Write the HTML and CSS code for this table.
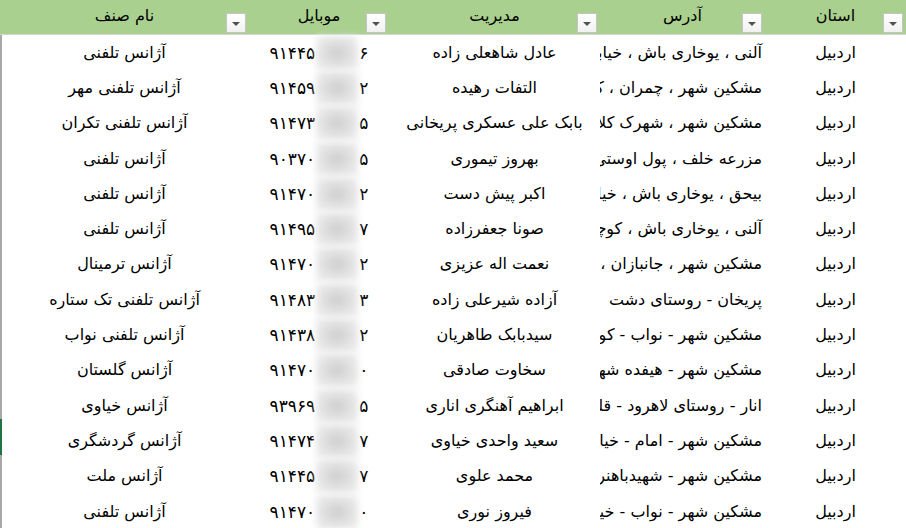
FILE: index.html
```html
<!DOCTYPE html>
<html lang="fa" dir="rtl">
<head>
<meta charset="utf-8">
<title>جدول آژانس‌ها</title>
<link rel="stylesheet" href="styles.css">
</head>
<body>
<div class="sheet">
  <div class="row head">
    <div class="hcell">استان<span class="filter"></span></div>
    <div class="hcell">آدرس<span class="filter"></span></div>
    <div class="hcell">مدیریت<span class="filter"></span></div>
    <div class="hcell">موبایل<span class="filter"></span></div>
    <div class="hcell">نام صنف<span class="filter"></span></div>
  </div>
  <div class="body">
    <div class="row"><div class="c">اردبیل</div><div class="c addr">آلنی ، یوخاری باش ، خیابان اصلی</div><div class="c">عادل شاهعلی زاده</div><div class="c mob"><span>۹۱۴۴۵</span><span class="blur"></span><span>۶</span></div><div class="c">آژانس تلفنی</div></div>
    <div class="row"><div class="c">اردبیل</div><div class="c addr">مشکین شهر ، چمران ، کوچه</div><div class="c">التفات رهیده</div><div class="c mob"><span>۹۱۴۵۹</span><span class="blur"></span><span>۲</span></div><div class="c">آژانس تلفنی مهر</div></div>
    <div class="row"><div class="c">اردبیل</div><div class="c addr">مشکین شهر ، شهرک کلانتری</div><div class="c">بابک علی عسکری پریخانی</div><div class="c mob"><span>۹۱۴۷۳</span><span class="blur"></span><span>۵</span></div><div class="c">آژانس تلفنی تکران</div></div>
    <div class="row"><div class="c">اردبیل</div><div class="c addr">مزرعه خلف ، پول اوستی ، خیابان</div><div class="c">بهروز تیموری</div><div class="c mob"><span>۹۰۳۷۰</span><span class="blur"></span><span>۵</span></div><div class="c">آژانس تلفنی</div></div>
    <div class="row"><div class="c">اردبیل</div><div class="c addr">بیحق ، یوخاری باش ، خیابان</div><div class="c">اکبر پیش دست</div><div class="c mob"><span>۹۱۴۷۰</span><span class="blur"></span><span>۲</span></div><div class="c">آژانس تلفنی</div></div>
    <div class="row"><div class="c">اردبیل</div><div class="c addr">آلنی ، یوخاری باش ، کوچه</div><div class="c">صونا جعفرزاده</div><div class="c mob"><span>۹۱۴۹۵</span><span class="blur"></span><span>۷</span></div><div class="c">آژانس تلفنی</div></div>
    <div class="row"><div class="c">اردبیل</div><div class="c addr">مشکین شهر ، جانبازان ، کوچه</div><div class="c">نعمت اله عزیزی</div><div class="c mob"><span>۹۱۴۷۰</span><span class="blur"></span><span>۲</span></div><div class="c">آژانس ترمینال</div></div>
    <div class="row"><div class="c">اردبیل</div><div class="c addr">پریخان - روستای دشت</div><div class="c">آزاده شیرعلی زاده</div><div class="c mob"><span>۹۱۴۸۳</span><span class="blur"></span><span>۳</span></div><div class="c">آژانس تلفنی تک ستاره</div></div>
    <div class="row"><div class="c">اردبیل</div><div class="c addr">مشکین شهر - نواب - کوچه</div><div class="c">سیدبابک طاهریان</div><div class="c mob"><span>۹۱۴۳۸</span><span class="blur"></span><span>۲</span></div><div class="c">آژانس تلفنی نواب</div></div>
    <div class="row"><div class="c">اردبیل</div><div class="c addr">مشکین شهر - هیفده شهریور</div><div class="c">سخاوت صادقی</div><div class="c mob"><span>۹۱۴۷۰</span><span class="blur"></span><span>۰</span></div><div class="c">آژانس گلستان</div></div>
    <div class="row"><div class="c">اردبیل</div><div class="c addr">انار - روستای لاهرود - قلعه</div><div class="c">ابراهیم آهنگری اناری</div><div class="c mob"><span>۹۳۹۶۹</span><span class="blur"></span><span>۵</span></div><div class="c">آژانس خیاوی</div></div>
    <div class="row"><div class="c">اردبیل</div><div class="c addr">مشکین شهر - امام - خیابان</div><div class="c">سعید واحدی خیاوی</div><div class="c mob"><span>۹۱۴۷۴</span><span class="blur"></span><span>۷</span></div><div class="c">آژانس گردشگری</div></div>
    <div class="row"><div class="c">اردبیل</div><div class="c addr">مشکین شهر - شهیدباهنر</div><div class="c">محمد علوی</div><div class="c mob"><span>۹۱۴۴۵</span><span class="blur"></span><span>۷</span></div><div class="c">آژانس ملت</div></div>
    <div class="row"><div class="c">اردبیل</div><div class="c addr">مشکین شهر - نواب - خیابان</div><div class="c">فیروز نوری</div><div class="c mob"><span>۹۱۴۷۰</span><span class="blur"></span><span>۰</span></div><div class="c">آژانس تلفنی</div></div>
    <span class="marker"></span>
  </div>
</div>
</body>
</html>
```

FILE: styles.css
```css
html, body {
  margin: 0;
  padding: 0;
  background: #ffffff;
}
body {
  width: 906px;
  height: 528px;
  overflow: hidden;
  font-family: "DejaVu Sans", "Noto Sans", sans-serif;
  font-size: 16px;
  color: #000;
}
.sheet {
  direction: rtl;
  width: 906px;
}
.row {
  display: grid;
  grid-template-columns: 141px 165px 211px 140px 249px;
  height: 35.3px;
  align-items: center;
}
.head {
  height: 34px;
  background: #a9d08e;
  border-bottom: 1px solid #d2d8ce;
}
.hcell {
  position: relative;
  height: 34px;
  line-height: 32px;
  text-align: center;
}
.filter {
  position: absolute;
  right: 3px;
  bottom: 1px;
  width: 18px;
  height: 18px;
  background: linear-gradient(#ffffff, #f1f1f1);
  border: 1px solid #c4c4c4;
}
.filter::after {
  content: "";
  position: absolute;
  left: 5px;
  top: 8px;
  border-left: 4px solid transparent;
  border-right: 4px solid transparent;
  border-top: 4px solid #505050;
}
.body {
  position: relative;
  border-left: 2px solid #a8a8a8;
}
.c {
  text-align: center;
  white-space: nowrap;
  overflow: hidden;
  line-height: 32px;
}
.addr {
  text-align: right;
  padding-right: 3px;
}
.mob {
  direction: ltr;
  display: flex;
  justify-content: center;
  align-items: center;
  overflow: visible;
  font-size: 17px;
}
.blur {
  display: inline-block;
  width: 42px;
  height: 34px;
  margin: 0 1px;
  background: radial-gradient(ellipse at center, #cdcdcd 0%, #e0e0e0 45%, #f2f2f2 100%);
  filter: blur(3px);
}
.marker {
  position: absolute;
  left: -2px;
  top: 384px;
  width: 2px;
  height: 36px;
  background: #217346;
}
```
